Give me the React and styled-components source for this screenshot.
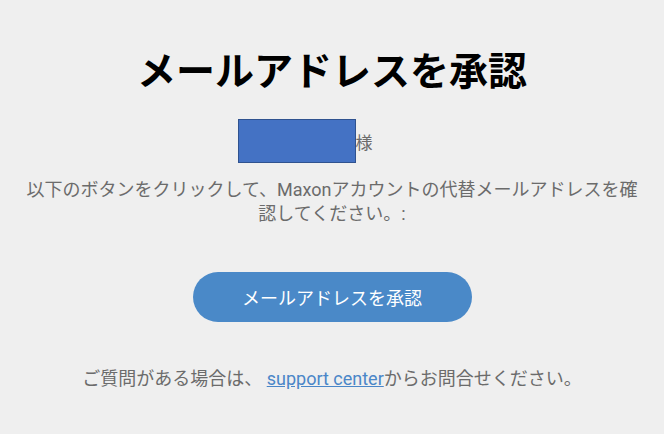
import React from "react";
import styled, { createGlobalStyle } from "styled-components";

const Global = createGlobalStyle`
  html, body {
    margin: 0;
    padding: 0;
    background: #efefef;
  }
  body {
    font-family: Roboto, "Noto Sans CJK JP", sans-serif;
  }
`;

const Page = styled.div`
  min-height: 434px;
  box-sizing: border-box;
  padding: 48px 24px 0;
  display: flex;
  flex-direction: column;
  align-items: center;
  text-align: center;
`;

const Title = styled.h1`
  margin: 0;
  font-size: 39px;
  line-height: 48px;
  font-weight: 700;
  color: #000;
  letter-spacing: 0;
`;

const NameRow = styled.div`
  margin-top: 23px;
  display: flex;
  align-items: center;
  justify-content: center;
  padding-right: 54px;
  font-size: 17px;
  color: #6b6b6b;
`;

const Redacted = styled.span`
  display: block;
  width: 116px;
  height: 42px;
  background: #4472c4;
  border: 1px solid #2f528f;
`;

const Message = styled.p`
  margin: 15px 0 0;
  font-size: 18px;
  line-height: 24px;
  color: #6b6b6b;
`;

const Button = styled.a`
  margin-top: 46px;
  display: flex;
  align-items: center;
  justify-content: center;
  width: 279px;
  height: 50px;
  border-radius: 25px;
  background: #4a89c8;
  color: #fff;
  font-size: 18px;
  text-decoration: none;
`;

const Footer = styled.p`
  margin: 45px 0 0;
  font-size: 18px;
  line-height: 24px;
  color: #6b6b6b;
`;

const Link = styled.a`
  color: #4a86c8;
  text-decoration: underline;
`;

export default function App() {
  return (
    <>
      <Global />
      <Page>
        <Title>メールアドレスを承認</Title>
        <NameRow>
          <Redacted />
          様
        </NameRow>
        <Message>
          以下のボタンをクリックして、Maxonアカウントの代替メールアドレスを確認してください。:
        </Message>
        <Button href="#">メールアドレスを承認</Button>
        <Footer>
          ご質問がある場合は、 <Link href="#">support center</Link>からお問合せください。
        </Footer>
      </Page>
    </>
  );
}
